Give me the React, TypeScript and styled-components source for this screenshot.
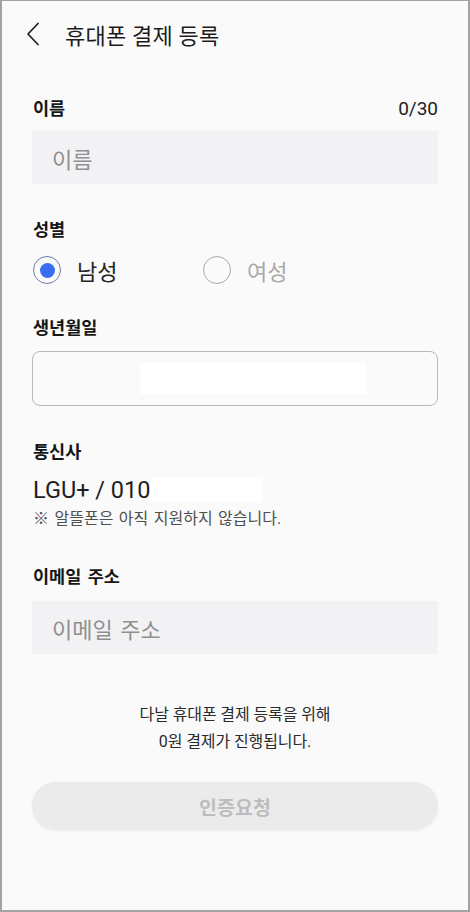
import React from 'react';
import styled, { createGlobalStyle } from 'styled-components';

const GlobalStyle = createGlobalStyle`
  html, body {
    margin: 0;
    padding: 0;
    background: #fafafa;
  }
  * {
    box-sizing: border-box;
  }
`;

const Screen = styled.div`
  min-height: 100vh;
  background: #fafafa;
  border: 2px solid #a3a3a3;
  border-top-width: 1px;
  font-family: Roboto, 'Noto Sans CJK KR', sans-serif;
  color: #1e1e1e;
`;

const Header = styled.header`
  height: 65px;
  display: flex;
  align-items: center;
  padding-left: 22px;
`;

const BackButton = styled.button`
  display: flex;
  align-items: center;
  justify-content: center;
  width: 18px;
  height: 28px;
  padding: 0;
  border: 0;
  background: none;
  margin-right: 23px;
`;

const Title = styled.h1`
  margin: 0;
  font-size: 22px;
  font-weight: 400;
  letter-spacing: 0.2px;
  color: #1c1c1c;
`;

const Form = styled.main`
  display: flex;
  flex-direction: column;
  padding: 0 30px;
`;

const Field = styled.section<{ $top: number; $gap: number }>`
  display: flex;
  flex-direction: column;
  gap: ${(p) => p.$gap}px;
  margin-top: ${(p) => p.$top}px;
`;

const LabelRow = styled.div`
  display: flex;
  justify-content: space-between;
  align-items: center;
  padding-left: 1px;
  height: 24px;
`;

const Label = styled.label`
  font-size: 17.5px;
  font-weight: 700;
  line-height: 24px;
  word-spacing: 2px;
  color: #161616;
`;

const Counter = styled.span`
  font-size: 19px;
  line-height: 24px;
  color: #222;
`;

const Input = styled.div`
  height: 53px;
  display: flex;
  align-items: center;
  padding-left: 20px;
  background: #f2f2f4;
  font-size: 22px;
  word-spacing: 2px;
  color: #8f8f8f;
`;

const OutlinedInput = styled.div`
  height: 55px;
  display: flex;
  align-items: center;
  padding-left: 107px;
  border: 1px solid #b9b9b9;
  border-radius: 8px;
  background: #fafafa;
`;

const Redact = styled.span<{ $w: number; $h: number }>`
  display: inline-block;
  width: ${(p) => p.$w}px;
  height: ${(p) => p.$h}px;
  background: #fff;
`;

const RadioGroup = styled.div`
  display: flex;
  align-items: center;
  height: 32px;
  padding-left: 1px;
`;

const RadioOption = styled.div<{ $checked?: boolean }>`
  display: flex;
  align-items: center;
  width: 170px;
  gap: 16px;
  font-size: 22px;
  color: ${(p) => (p.$checked ? '#262626' : '#a9a9a9')};
`;

const RadioRing = styled.span<{ $checked?: boolean }>`
  width: 28px;
  height: 28px;
  border-radius: 50%;
  border: 1.5px solid ${(p) => (p.$checked ? '#6a7ba6' : '#a8a8a8')};
  display: flex;
  align-items: center;
  justify-content: center;

  &::after {
    content: '';
    width: 15px;
    height: 15px;
    border-radius: 50%;
    background: ${(p) => (p.$checked ? '#3a6ef0' : 'transparent')};
  }
`;

const Carrier = styled.div`
  display: flex;
  align-items: center;
  height: 30px;
  padding-left: 1px;
  font-size: 23.5px;
  color: #1e1e1e;
`;

const Note = styled.p`
  margin: 3px 0 0;
  padding-left: 1px;
  font-size: 16px;
  line-height: 22px;
  word-spacing: 1.5px;
  color: #4f4f4f;
`;

const Info = styled.p`
  margin: 47px 0 0;
  text-align: center;
  font-size: 16px;
  line-height: 27px;
  letter-spacing: -0.1px;
  color: #2b2b2b;
`;

const SubmitButton = styled.button`
  margin-top: 27px;
  height: 48px;
  border: 0;
  border-radius: 24px;
  background: #ebebeb;
  box-shadow: 0 1px 3px rgba(0, 0, 0, 0.06);
  font-family: inherit;
  font-size: 19.5px;
  font-weight: 700;
  color: #bdbdbd;
`;

const App: React.FC = () => {
  return (
    <Screen>
      <GlobalStyle />
      <Header>
        <BackButton aria-label="뒤로">
          <svg width="14" height="24" viewBox="0 0 14 24" fill="none">
            <path d="M12 1.5L2 12L12 22.5" stroke="#222" strokeWidth="1.8" strokeLinecap="round" strokeLinejoin="round" />
          </svg>
        </BackButton>
        <Title>휴대폰 결제 등록</Title>
      </Header>

      <Form>
        <Field $top={31} $gap={10}>
          <LabelRow>
            <Label>이름</Label>
            <Counter>0/30</Counter>
          </LabelRow>
          <Input>이름</Input>
        </Field>

        <Field $top={34} $gap={12}>
          <LabelRow>
            <Label>성별</Label>
          </LabelRow>
          <RadioGroup>
            <RadioOption $checked>
              <RadioRing $checked />
              남성
            </RadioOption>
            <RadioOption>
              <RadioRing />
              여성
            </RadioOption>
          </RadioGroup>
        </Field>

        <Field $top={30} $gap={11}>
          <LabelRow>
            <Label>생년월일</Label>
          </LabelRow>
          <OutlinedInput>
            <Redact $w={226} $h={31} />
          </OutlinedInput>
        </Field>

        <Field $top={34} $gap={11}>
          <LabelRow>
            <Label>통신사</Label>
          </LabelRow>
          <div>
            <Carrier>
              LGU+ / 010
              <Redact $w={113} $h={26} />
            </Carrier>
            <Note>※ 알뜰폰은 아직 지원하지 않습니다.</Note>
          </div>
        </Field>

        <Field $top={35} $gap={12}>
          <LabelRow>
            <Label>이메일 주소</Label>
          </LabelRow>
          <Input>이메일 주소</Input>
        </Field>

        <Info>
          다날 휴대폰 결제 등록을 위해
          <br />
          0원 결제가 진행됩니다.
        </Info>

        <SubmitButton disabled>인증요청</SubmitButton>
      </Form>
    </Screen>
  );
};

export default App;
